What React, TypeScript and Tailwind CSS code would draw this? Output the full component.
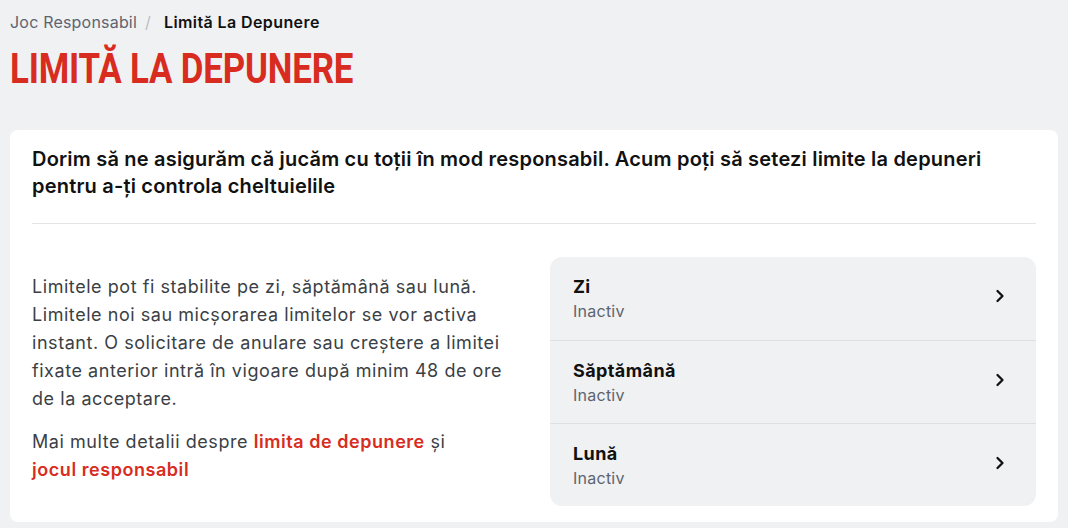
import React from 'react';
import { ChevronRight } from 'lucide-react';

const periods = [
  { id: 'day', label: 'Zi', status: 'Inactiv' },
  { id: 'week', label: 'Săptămână', status: 'Inactiv' },
  { id: 'month', label: 'Lună', status: 'Inactiv' },
];

export default function App() {
  return (
    <div className="min-h-screen bg-[#f0f1f3] px-[10px] pt-[11px] font-['Inter',sans-serif] text-[#111]">
      <nav className="flex items-center gap-[8px] text-[16px] leading-[22px] tracking-[0.2px]">
        <span className="text-[#5d6470]">Joc Responsabil</span>
        <span className="text-[#b9bdc4]">/</span>
        <span className="ml-[5px] font-semibold tracking-[0.4px] text-[#111]">Limită La Depunere</span>
      </nav>

      {/* condensed display face approximated by squeezing Roboto */}
      <h1 className="mt-[12px] h-[48px] origin-left scale-x-[0.83] whitespace-nowrap font-['Roboto',sans-serif] text-[42px] font-bold leading-[48px] tracking-[-0.2px] text-[#d82c21]">
        LIMITĂ LA DEPUNERE
      </h1>

      <section className="mt-[37px] rounded-[8px] bg-white px-[22px] pb-[16px] pt-[16px]">
        <p className="text-[20px] font-semibold leading-[27px] tracking-[0.2px] text-[#111]">
          Dorim să ne asigurăm că jucăm cu toții în mod responsabil. Acum poți să setezi limite la depuneri
          pentru a-ți controla cheltuielile
        </p>

        <div className="mt-[23px] h-px bg-[#e4e5e8]" />

        <div className="mt-[33px] grid grid-cols-2 items-center gap-[32px]">
          <div className="pb-[7px] text-[18px] leading-[28px] tracking-[0.55px] text-[#3b3f46]">
            <p>
              Limitele pot fi stabilite pe zi, săptămână sau lună. Limitele noi sau micșorarea limitelor se vor
              activa instant. O solicitare de anulare sau creștere a limitei fixate anterior intră în vigoare după
              minim 48 de ore de la acceptare.
            </p>
            <p className="mt-[15px]">
              Mai multe detalii despre{' '}
              <a href="#" className="whitespace-nowrap font-semibold text-[#d82c21]">
                limita de depunere
              </a>{' '}
              și{' '}
              <a href="#" className="whitespace-nowrap font-semibold text-[#d82c21]">
                jocul responsabil
              </a>
            </p>
          </div>

          <div className="overflow-hidden rounded-[12px] bg-[#f0f1f3]">
            {periods.map((p, i) => (
              <button
                key={p.id}
                className={
                  'flex h-[83px] w-full items-center justify-between pl-[23px] pr-[26px] text-left' +
                  (i > 0 ? ' border-t border-[#dfe0e4]' : '')
                }
              >
                <span className="flex flex-col">
                  <span className="text-[18px] font-bold leading-[25px] tracking-[0.4px] text-[#111]">
                    {p.label}
                  </span>
                  <span className="text-[16px] leading-[24px] tracking-[0.25px] text-[#5d6470]">{p.status}</span>
                </span>
                <ChevronRight size={20} strokeWidth={2.75} className="mb-[5px] text-[#111]" />
              </button>
            ))}
          </div>
        </div>
      </section>
    </div>
  );
}
